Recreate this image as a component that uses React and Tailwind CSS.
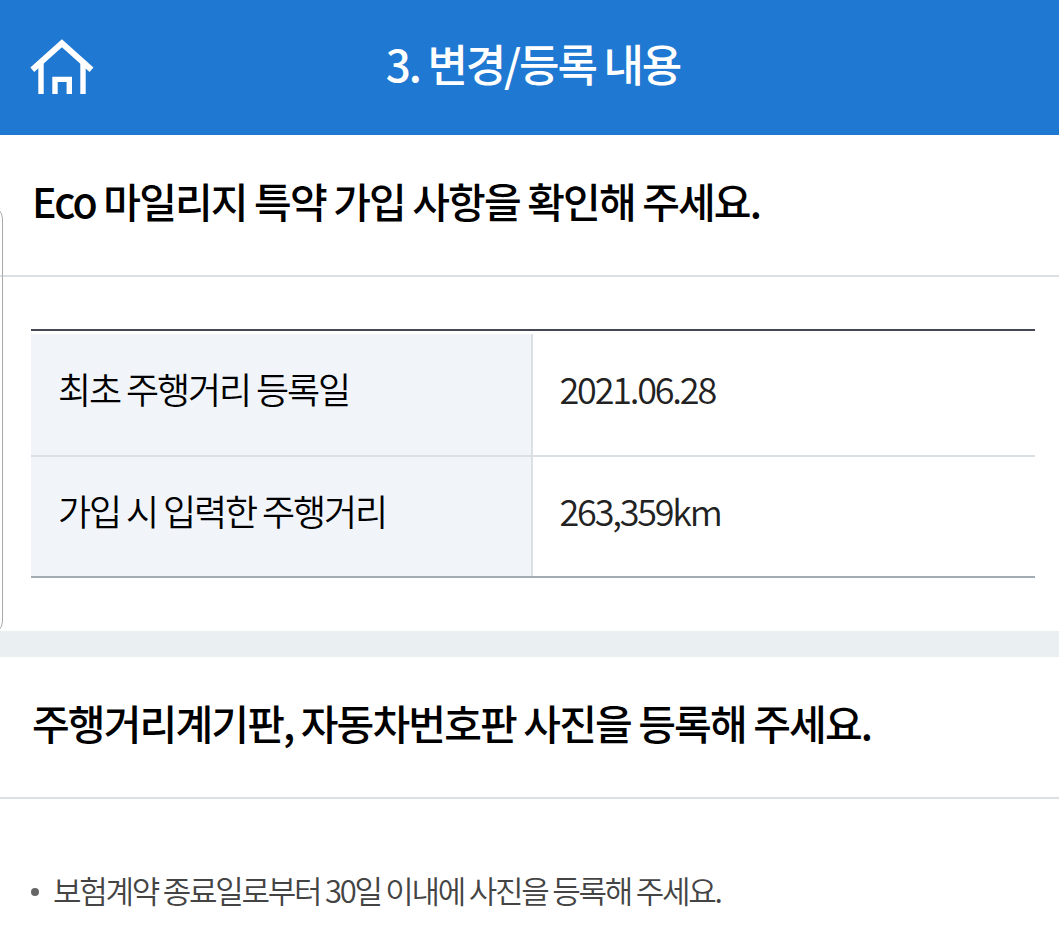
const rows = [
  { label: "최초 주행거리 등록일", value: "2021.06.28" },
  { label: "가입 시 입력한 주행거리", value: "263,359km" },
];

function HomeIcon() {
  return (
    <svg
      width="64"
      height="56"
      viewBox="0 0 64 56"
      fill="none"
      stroke="currentColor"
      strokeWidth="5.4"
      aria-hidden="true"
    >
      <path d="M2.300 30.700 31.900 4.300 61.500 30.700" strokeWidth="5.9" />
      <path d="M11 24v31M53 24v31" />
      <path d="M25 55V40.400h14.300V55" />
    </svg>
  );
}

function SectionTitle({ children }) {
  return (
    <h2 className="h-[142px] border-b-2 border-[#dae0e4] pl-8 pt-[35px] text-[41px] leading-[60px] font-medium tracking-[-1.86px] text-black whitespace-nowrap">
      {children}
    </h2>
  );
}

export default function App() {
  return (
    <div className="relative h-[950px] w-full overflow-hidden bg-white font-['Noto_Sans_CJK_KR',sans-serif]">
      <header className="grid h-[135px] grid-cols-[1fr_auto_1fr] bg-[#1f78d1] text-white">
        <a href="#" aria-label="홈" className="pl-[30px] pt-[39px]">
          <HomeIcon />
        </a>
        <h1 className="pl-[7px] pt-[33px] text-[44px] leading-[60px] font-medium tracking-[-2.16px] whitespace-nowrap">
          3. 변경/등록 내용
        </h1>
      </header>

      <section className="h-[496px]">
        <SectionTitle>Eco 마일리지 특약 가입 사항을 확인해 주세요.</SectionTitle>
        <dl className="ml-[31px] mr-6 mt-[52px] border-t-2 border-b-2 border-t-[#454854] border-b-[#a3abb3] text-[36px] leading-[52px] font-[350] tracking-[-2.1px]">
          {rows.map((row, i) => (
            <div
              key={row.label}
              className={
                i === 0
                  ? "grid h-[126px] grid-cols-[502px_1fr] border-b-2 border-[#dae0e4] pt-[3px]"
                  : "grid h-[119px] grid-cols-[502px_1fr]"
              }
            >
              <dt
                className={`border-r-2 border-[#dae0e4] bg-[#f1f5fa] pl-[27px] text-black ${i === 0 ? "pt-7" : "pt-[27px]"}`}
              >
                {row.label}
              </dt>
              <dd
                className={`pl-[26.5px] tracking-[-2.2px] text-[#222222] ${i === 0 ? "pt-7" : "pt-[27px]"}`}
              >
                {row.value}
              </dd>
            </div>
          ))}
        </dl>
      </section>

      <div className="h-[26px] bg-[#eaeff2]" />

      <section>
        <SectionTitle>주행거리계기판, 자동차번호판 사진을 등록해 주세요.</SectionTitle>
        <ul className="pt-[67px]">
          <li className="flex items-center pl-[31px] text-[31px] leading-[48px] font-[350] tracking-[-2.26px] text-[#444444] whitespace-nowrap">
            <span className="mt-[3px] mr-[14px] size-2 rounded-full bg-[#666666]" />
            보험계약 종료일로부터 30일 이내에 사진을 등록해 주세요.
          </li>
        </ul>
      </section>

      {/* edge panel handle */}
      <div className="absolute top-[205px] -left-[27px] h-[430px] w-[30px] rounded-[14px] border border-[#aaaaaa]" />
    </div>
  );
}
